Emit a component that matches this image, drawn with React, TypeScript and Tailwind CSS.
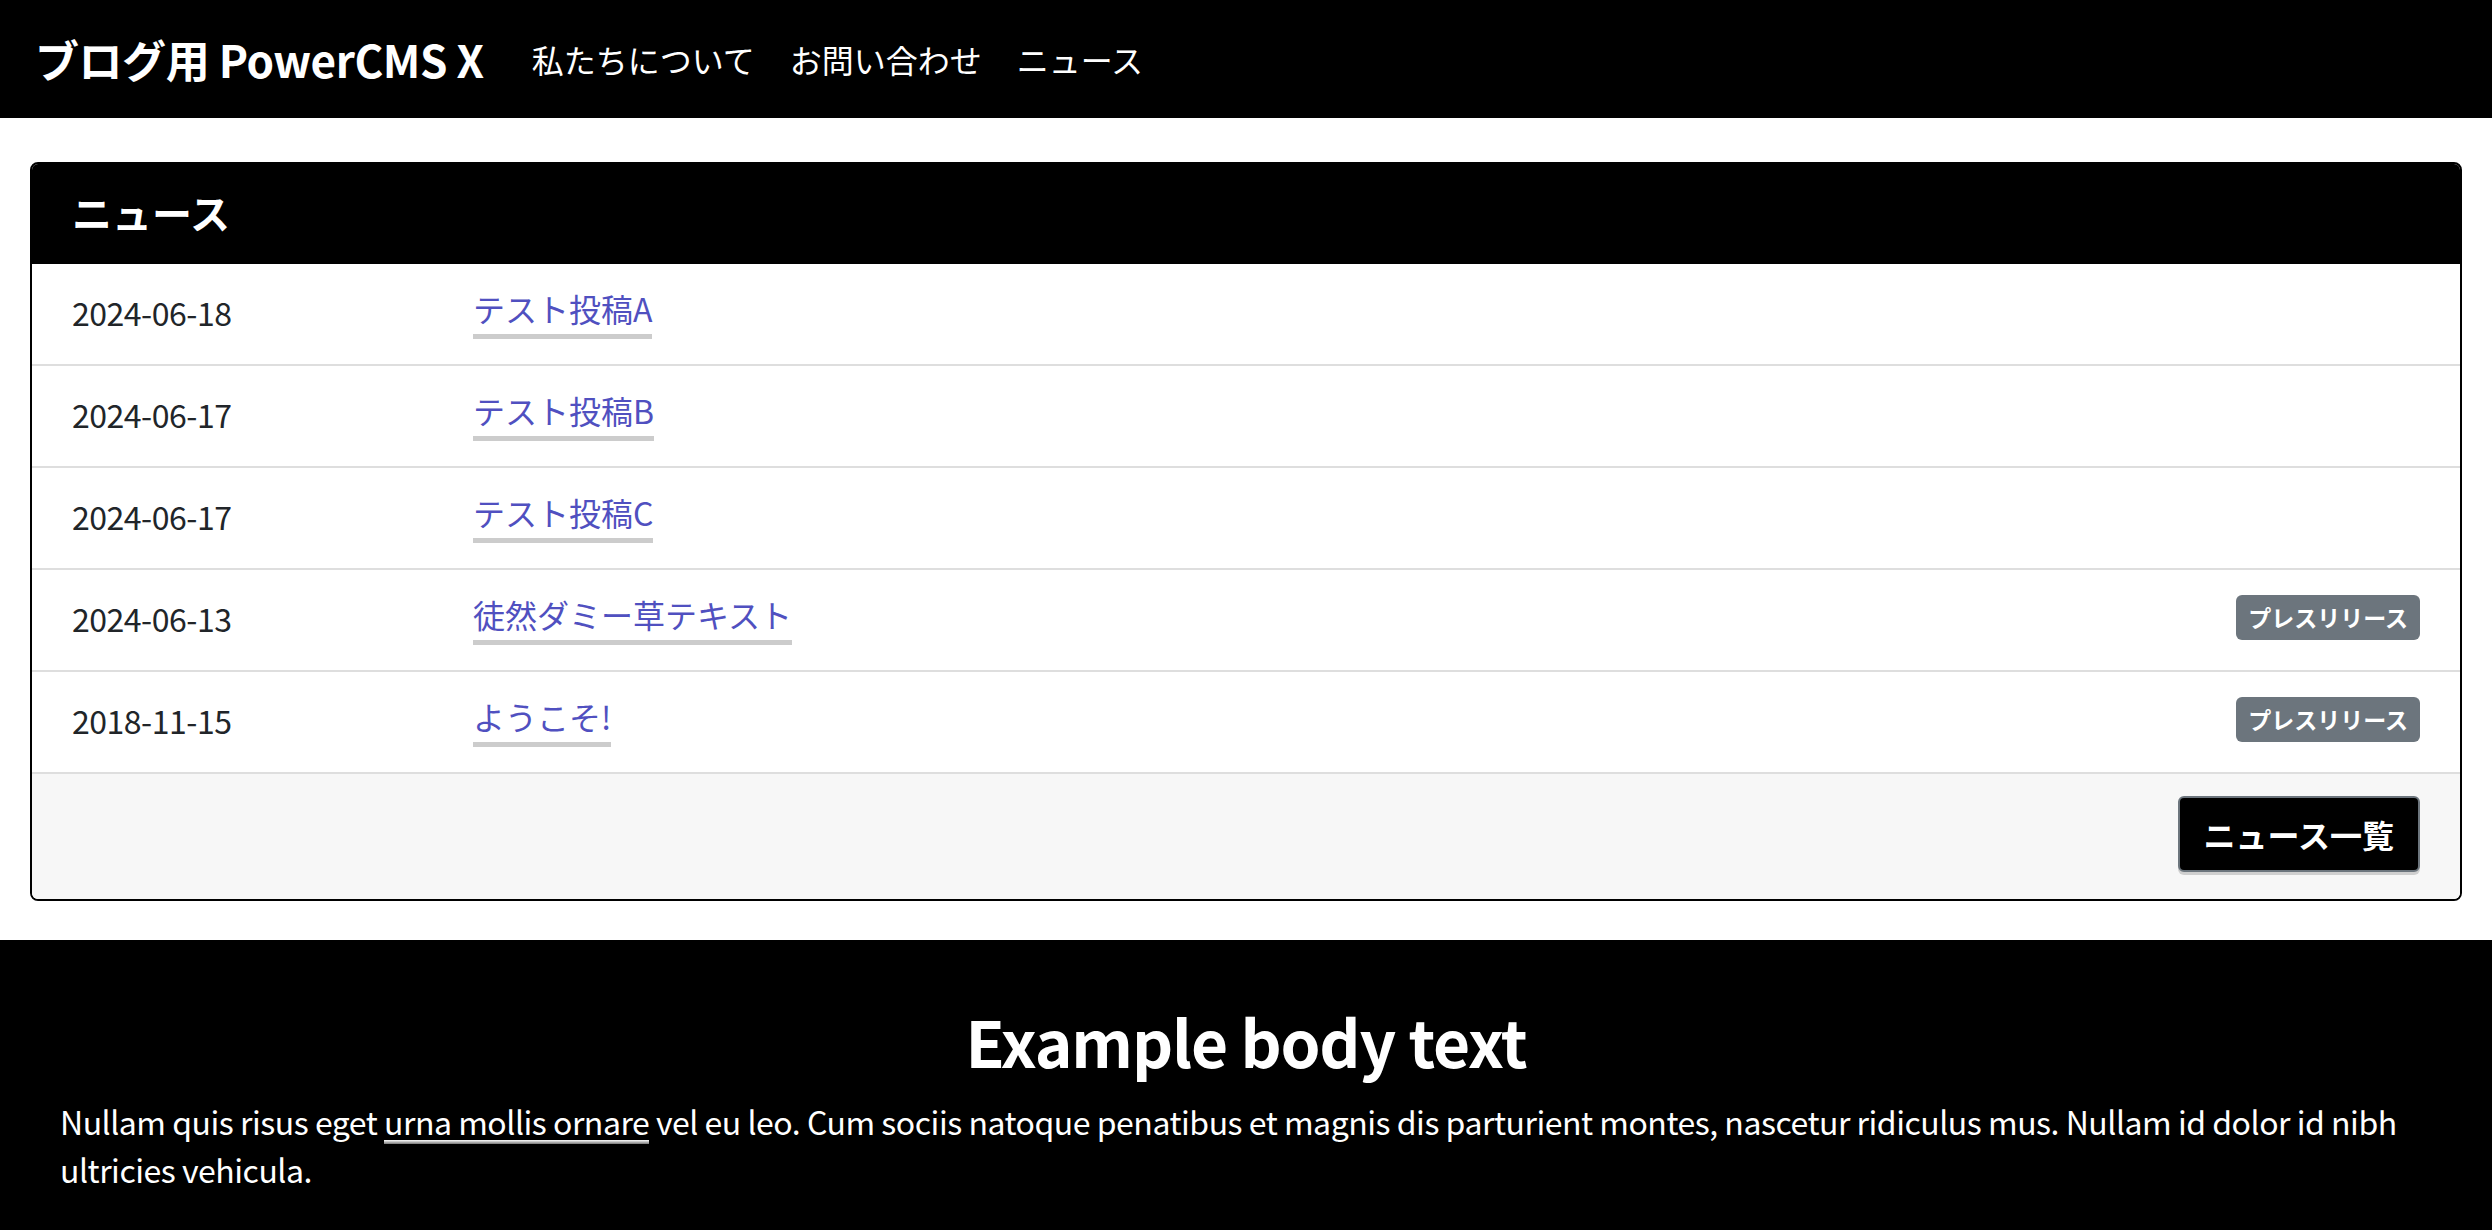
const news = [
    { date: "2024-06-18", title: "テスト投稿A", badge: false },
    { date: "2024-06-17", title: "テスト投稿B", badge: false },
    { date: "2024-06-17", title: "テスト投稿C", badge: false },
    { date: "2024-06-13", title: "徒然ダミー草テキスト", badge: true },
    { date: "2018-11-15", title: "ようこそ!", badge: true },
];

export default function App() {
    return (
        <div className="min-h-[1230px] bg-white font-['Noto_Sans_CJK_JP','Noto_Sans',sans-serif] text-[#212529]">
            <header className="flex h-[118px] items-center bg-black px-[35px] text-white">
                <a href="#" className="mr-[48px] text-[44px] font-bold leading-[1.2] tracking-[-0.01em]">ブログ用 PowerCMS X</a>
                <nav className="flex items-center gap-[35px] text-[32px] leading-[1.5]">
                    <a href="#">私たちについて</a>
                    <a href="#">お問い合わせ</a>
                    <a href="#">ニュース</a>
                </nav>
            </header>

            <main className="px-[30px] pt-[44px] pb-[39px]">
                <section className="overflow-hidden rounded-[8px] border-2 border-black">
                    <div className="flex h-[100px] items-center bg-black px-[40px] pb-[4px]">
                        <h2 className="text-[40px] font-bold leading-[1.2] text-white">ニュース</h2>
                    </div>
                    <ul>
                        {news.map((item, i) => (
                            <li key={i} className="flex h-[102px] items-center border-b-2 border-[#dedede] px-[40px] pb-[5px] text-[32px] leading-[1.5]">
                                <span className="w-[401px] shrink-0 tracking-[-0.015em] text-[#212529]">{item.date}</span>
                                <a href="#" className="border-b-[5px] border-[#cccccc] pb-[2px] text-[#5050c0]">{item.title}</a>
                                {item.badge && (
                                    <span className="ml-auto rounded-[6px] bg-[#6c757d] px-[12px] py-[11px] text-[23px] font-bold leading-none text-white">
                                        プレスリリース
                                    </span>
                                )}
                            </li>
                        ))}
                    </ul>
                    <div className="flex h-[125px] items-center justify-end bg-[#f7f7f7] px-[40px] pb-[5px]">
                        <a href="#" className="rounded-[6px] border-2 border-[#6c757d] bg-black px-[24px] py-[12px] text-[32px] font-bold leading-[1.5] text-white shadow-[0_3px_0_#cfcfcf]">
                            ニュース一覧
                        </a>
                    </div>
                </section>
            </main>

            <footer className="bg-black px-[60px] pt-[62px] pb-[48px] text-white">
                <h2 className="mb-[18px] text-center text-[64px] font-bold leading-[1.2] tracking-[-0.018em]">Example body text</h2>
                <p className="text-[32px] leading-[1.5] tracking-[-0.015em]">
                    Nullam quis risus eget{" "}
                    <a href="#" className="bg-[linear-gradient(to_bottom,#ffffff,#777777)] bg-[length:100%_4px] bg-bottom bg-no-repeat">
                        urna mollis ornare
                    </a>{" "}
                    vel eu leo. Cum sociis natoque penatibus et magnis dis parturient montes, nascetur ridiculus mus. Nullam id dolor id nibh ultricies vehicula.
                </p>
            </footer>
        </div>
    );
}
